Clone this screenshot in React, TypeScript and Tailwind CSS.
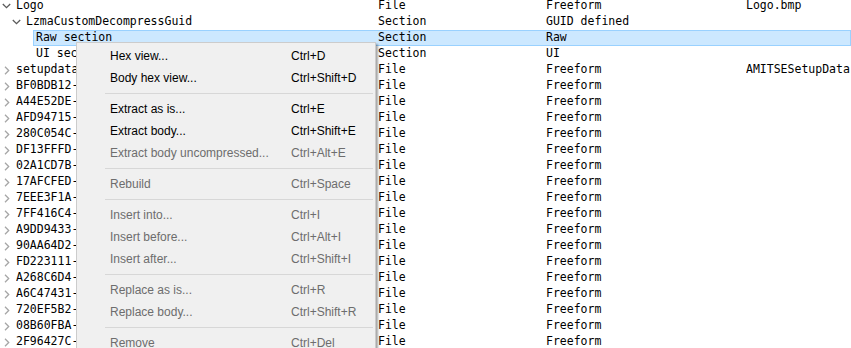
import React from 'react'

type Row = {
  name: string
  level: 0 | 1 | 2
  arrow: 'open' | 'closed' | 'none'
  type: string
  subtype: string
  text?: string
  selected?: boolean
}

const ROWS: Row[] = [
  { name: 'Logo', level: 0, arrow: 'open', type: 'File', subtype: 'Freeform', text: 'Logo.bmp' },
  { name: 'LzmaCustomDecompressGuid', level: 1, arrow: 'open', type: 'Section', subtype: 'GUID defined' },
  { name: 'Raw section', level: 2, arrow: 'none', type: 'Section', subtype: 'Raw', selected: true },
  { name: 'UI section', level: 2, arrow: 'none', type: 'Section', subtype: 'UI' },
  { name: 'setupdata', level: 0, arrow: 'closed', type: 'File', subtype: 'Freeform', text: 'AMITSESetupData' },
  ...[
    'BF0BDB12-4A9B-4C1F-8B2D-1E0F9A3C7D21',
    'A44E52DE-6C1A-4F3B-9E2D-5B7A0C8E1F34',
    'AFD94715-2B3C-4D5E-8F6A-7B8C9D0E1F23',
    '280C054C-9D8E-4F7A-B6C5-D4E3F2A1B0C9',
    'DF13FFFD-1A2B-4C3D-9E4F-5A6B7C8D9E0F',
    '02A1CD7B-3C4D-4E5F-8A6B-7C8D9E0F1A2B',
    '17AFCFED-5E6F-4A7B-9C8D-0E1F2A3B4C5D',
    '7EEE3F1A-7A8B-4C9D-8E0F-1A2B3C4D5E6F',
    '7FF416C4-9C0D-4E1F-A2B3-C4D5E6F7A8B9',
    'A9DD9433-B1C2-4D3E-8F4A-5B6C7D8E9F0A',
    '90AA64D2-D3E4-4F5A-9B6C-7D8E9F0A1B2C',
    'FD223111-F5A6-4B7C-8D9E-0F1A2B3C4D5E',
    'A268C6D4-17B8-4C9D-AE0F-1A2B3C4D5E6F',
    'A6C47431-39C0-4D1E-8F2A-3B4C5D6E7F8A',
    '720EF5B2-5BD2-4E3F-9A4B-5C6D7E8F9A0B',
    '08B60FBA-7DE4-4F5A-8B6C-7D8E9F0A1B2C',
    '2F96427C-9FA6-4B7C-9D8E-9F0A1B2C3D4E',
  ].map((g): Row => ({ name: g, level: 0, arrow: 'closed', type: 'File', subtype: 'Freeform' })),
]

const INDENT: Record<Row['level'], string> = {
  0: 'pl-0',
  1: 'pl-[10px]',
  2: 'pl-[20px]',
}

type MenuEntry = { label: string; keys: string; disabled?: boolean } | 'sep'

const MENU: MenuEntry[] = [
  { label: 'Hex view...', keys: 'Ctrl+D' },
  { label: 'Body hex view...', keys: 'Ctrl+Shift+D' },
  'sep',
  { label: 'Extract as is...', keys: 'Ctrl+E' },
  { label: 'Extract body...', keys: 'Ctrl+Shift+E' },
  { label: 'Extract body uncompressed...', keys: 'Ctrl+Alt+E', disabled: true },
  'sep',
  { label: 'Rebuild', keys: 'Ctrl+Space', disabled: true },
  'sep',
  { label: 'Insert into...', keys: 'Ctrl+I', disabled: true },
  { label: 'Insert before...', keys: 'Ctrl+Alt+I', disabled: true },
  { label: 'Insert after...', keys: 'Ctrl+Shift+I', disabled: true },
  'sep',
  { label: 'Replace as is...', keys: 'Ctrl+R', disabled: true },
  { label: 'Replace body...', keys: 'Ctrl+Shift+R', disabled: true },
  'sep',
  { label: 'Remove', keys: 'Ctrl+Del', disabled: true },
]

function Chevron({ kind }: { kind: Row['arrow'] }) {
  if (kind === 'none') return null
  if (kind === 'open')
    return (
      <svg width="9" height="6" viewBox="0 0 9 6" className="ml-[2px]">
        <path d="M0.8 1 L4.5 4.7 L8.2 1" fill="none" stroke="#5a5a5a" strokeWidth="1.3" />
      </svg>
    )
  return (
    <svg width="6" height="9" viewBox="0 0 6 9" className="ml-[4px]">
      <path d="M1 0.8 L4.7 4.5 L1 8.2" fill="none" stroke="#a6a6a6" strokeWidth="1.3" />
    </svg>
  )
}

function TreeRow({ row }: { row: Row }) {
  return (
    <div className={`flex h-[16px] items-center ${INDENT[row.level]}`}>
      <span className="flex w-[13px] shrink-0 items-center">
        <Chevron kind={row.arrow} />
      </span>
      <div
        className={`flex h-[16px] min-w-0 flex-1 items-center border pl-[2px] ${
          row.selected ? 'border-[#99d1ff] bg-[#cce8ff]' : 'border-transparent'
        }`}
      >
        <span className="min-w-0 flex-1 overflow-hidden whitespace-nowrap">{row.name}</span>
        <span className="w-[168px] shrink-0 whitespace-nowrap">{row.type}</span>
        <span className="w-[200px] shrink-0 whitespace-nowrap">{row.subtype}</span>
        <span className="w-[104px] shrink-0 overflow-hidden whitespace-nowrap">{row.text ?? ''}</span>
      </div>
    </div>
  )
}

function ContextMenu() {
  return (
    <div className="absolute left-[76px] top-[42px] w-[300px] border border-[#cccccc] bg-[#f0f0f0] pt-[2px] font-['Liberation_Sans',Arial,sans-serif] text-[12px] shadow-[2px_2px_2px_rgba(0,0,0,0.35)]">
      {MENU.map((m, i) =>
        m === 'sep' ? (
          <div key={i} className="flex h-[9px] items-center pl-[28px] pr-[2px]">
            <div className="h-px w-full bg-[#d7d7d7]" />
          </div>
        ) : (
          <div
            key={i}
            className={`flex h-[22px] items-center pl-[33px] ${m.disabled ? 'text-[#6d6d6d]' : 'text-black'}`}
          >
            <span className="w-[181px] shrink-0 whitespace-nowrap">{m.label}</span>
            <span className="whitespace-nowrap">{m.keys}</span>
          </div>
        ),
      )}
    </div>
  )
}

export default function App() {
  return (
    <div className="relative h-[348px] w-[851px] overflow-hidden bg-white font-['DejaVu_Sans_Mono',monospace] text-[11.5px] text-black">
      <div className="-mt-[2px]">
        {ROWS.map((r) => (
          <TreeRow key={r.name} row={r} />
        ))}
      </div>
      <ContextMenu />
    </div>
  )
}
